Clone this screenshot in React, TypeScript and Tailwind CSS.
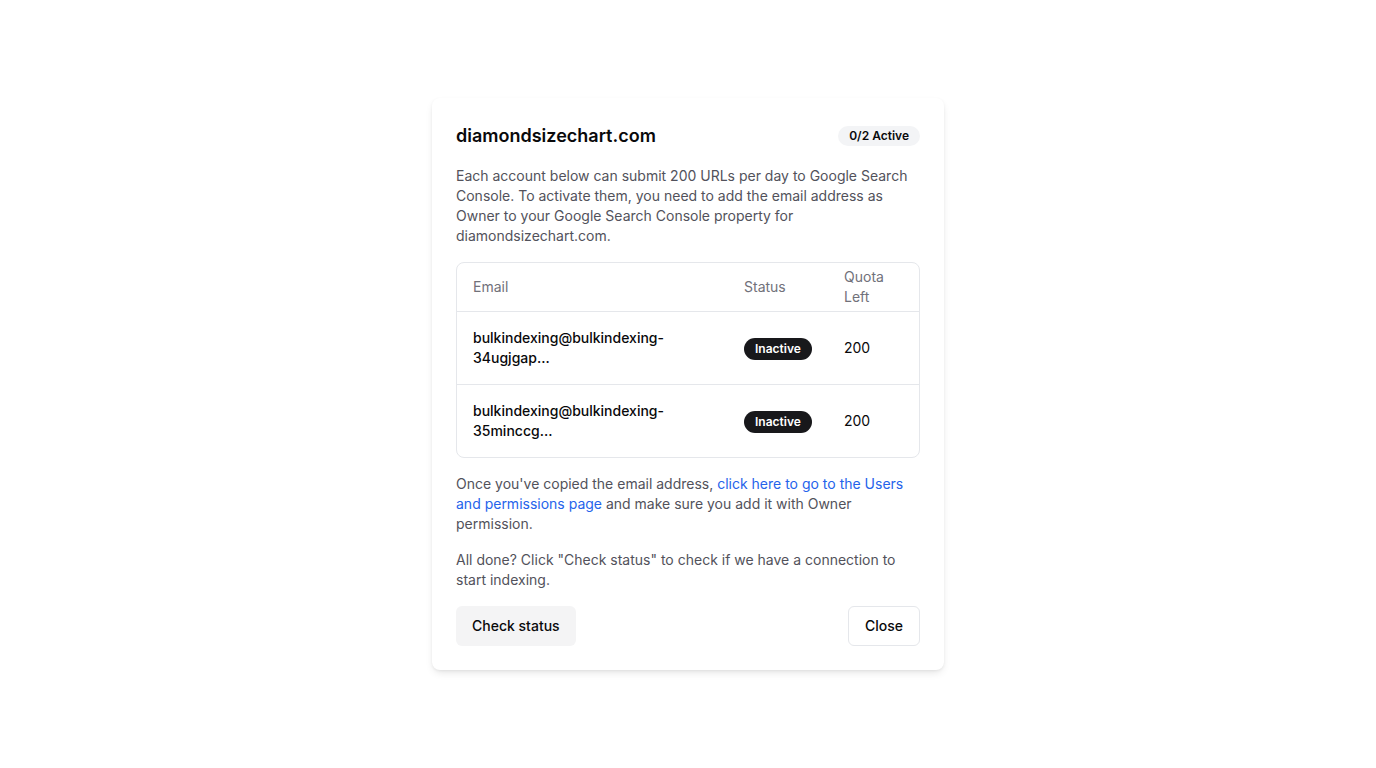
import React from "react";

function Row({ a, b }: { a: string; b: string }) {
  return (
    <tr className="border-t border-gray-200">
      <td className="p-4 text-sm leading-5 font-medium text-[#09090b] align-middle">
        {a}
        <br />
        {b}
      </td>
      <td className="p-4 align-middle">
        <span className="inline-flex items-center rounded-full bg-[#18181b] px-[11px] py-[3px] text-xs leading-4 font-semibold text-white">
          Inactive
        </span>
      </td>
      <td className="p-4 text-sm leading-5 text-[#09090b] align-middle">200</td>
    </tr>
  );
}

export default function App() {
  return (
    <div
      className="min-h-screen w-full bg-white flex items-center justify-center"
      style={{ fontFamily: "Inter, 'Noto Sans', sans-serif" }}
    >
      <div className="w-[512px] rounded-lg bg-white p-6 shadow-[0_4px_8px_-2px_rgba(0,0,0,0.12),0_1px_3px_rgba(0,0,0,0.05)]">
        <div className="flex items-center justify-between h-7">
          <h2 className="text-lg leading-7 font-semibold text-[#09090b]">diamondsizechart.com</h2>
          <span className="inline-flex items-center rounded-full bg-gray-100 px-[11px] py-0.5 text-xs leading-4 font-semibold text-[#09090b]">
            0/2 Active
          </span>
        </div>
        <p className="mt-4 text-sm leading-5 text-[#52525b]">
          Each account below can submit 200 URLs per day to Google Search Console. To activate them, you need to add
          the email address as Owner to your Google Search Console property for diamondsizechart.com.
        </p>
        <div className="mt-4 rounded-lg border border-gray-200 overflow-hidden">
          <table className="w-full table-fixed border-collapse">
            <colgroup>
              <col />
              <col className="w-[100px]" />
              <col className="w-[91px]" />
            </colgroup>
            <thead>
              <tr>
                <th className="h-12 px-4 text-left text-sm leading-5 font-normal text-[#71717a] align-middle">Email</th>
                <th className="h-12 px-4 text-left text-sm leading-5 font-normal text-[#71717a] align-middle">Status</th>
                <th className="h-12 px-4 text-left text-sm leading-5 font-normal text-[#71717a] align-middle">
                  Quota Left
                </th>
              </tr>
            </thead>
            <tbody>
              <Row a="bulkindexing@bulkindexing-" b="34ugjgap..." />
              <Row a="bulkindexing@bulkindexing-" b="35minccg..." />
            </tbody>
          </table>
        </div>
        <p className="mt-4 text-sm leading-5 text-[#52525b]">
          Once you've copied the email address,{" "}
          <a className="text-[#2563eb]" href="#">
            click here to go to the Users and permissions page
          </a>{" "}
          and make sure you add it with Owner permission.
        </p>
        <p className="mt-4 text-sm leading-5 text-[#52525b]">
          All done? Click "Check status" to check if we have a connection to start indexing.
        </p>
        <div className="mt-4 flex items-center justify-between">
          <button className="h-10 rounded-md bg-[#f4f4f5] px-4 text-sm font-medium text-[#09090b]">Check status</button>
          <button className="h-10 rounded-md border border-gray-200 bg-white px-4 text-sm font-medium text-[#09090b]">
            Close
          </button>
        </div>
      </div>
    </div>
  );
}
